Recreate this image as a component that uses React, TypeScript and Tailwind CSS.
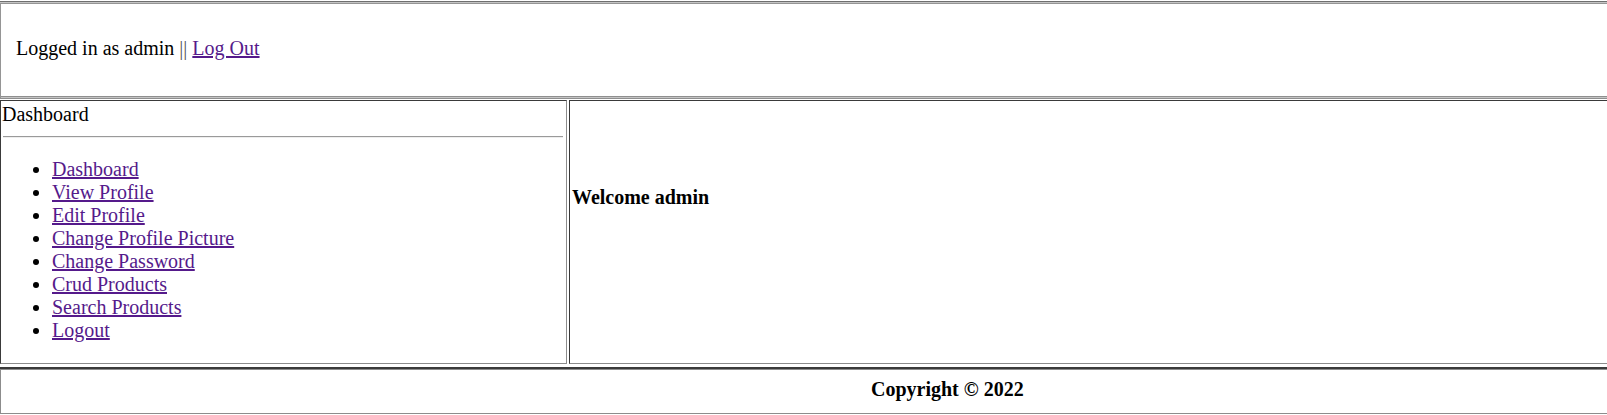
const links = [
  'Dashboard',
  'View Profile',
  'Edit Profile',
  'Change Profile Picture',
  'Change Password',
  'Crud Products',
  'Search Products',
  'Logout',
];

export default function App() {
  return (
    <div className="w-[1607px] h-[415px] overflow-hidden bg-white text-black font-['Liberation_Serif',serif] text-[20px] leading-[23px] pt-px">
      {/* Header frame */}
      <div className="border-t border-[#6f6f6f]">
        <div className="border-t border-[#c4c4c4]">
          <div className="border-t border-l border-[#959595]">
            <div className="h-[93px] pt-[33px] pl-[15px] border-b border-[#8f8f8f]">
              Logged in as admin <span className="text-[#555]">||</span>{' '}
              <a href="#" className="text-[#551a8b] underline">Log Out</a>
            </div>
            <div className="border-b border-[#c4c4c4]" />
          </div>
        </div>
      </div>
      <div className="border-b border-[#8f8f8f]" />

      {/* Body row */}
      <div className="flex gap-[2px] mt-px h-[264px]">
        <div className="w-[567px] shrink-0 border-t border-l border-[#3a3a3a] border-r border-b border-r-[#8c8c8c] border-b-[#8c8c8c] pt-[2px] pl-px pr-[3px]">
          <div>Dashboard</div>
          <hr className="mt-[10px] mb-0 ml-px border-t border-[#9a9a9a] border-b border-b-[#eeeeee]" />
          <ul className="list-disc pl-[50px] mt-[20px]">
            {links.map((l) => (
              <li key={l}>
                <a href="#" className="text-[#551a8b] underline">{l}</a>
              </li>
            ))}
          </ul>
        </div>
        <div className="flex-1 border-t border-l border-[#3a3a3a] border-b border-b-[#8c8c8c] pl-[2px] pt-[85px]">
          <b>Welcome admin</b>
        </div>
      </div>

      {/* Footer */}
      <div className="mt-[3px] border-t-2 border-[#3a3a3a]">
        <div className="border-t border-l border-b border-[#8c8c8c] h-[45px] pt-[8px] pl-[870px]">
          <b>Copyright © 2022</b>
        </div>
      </div>
    </div>
  );
}
